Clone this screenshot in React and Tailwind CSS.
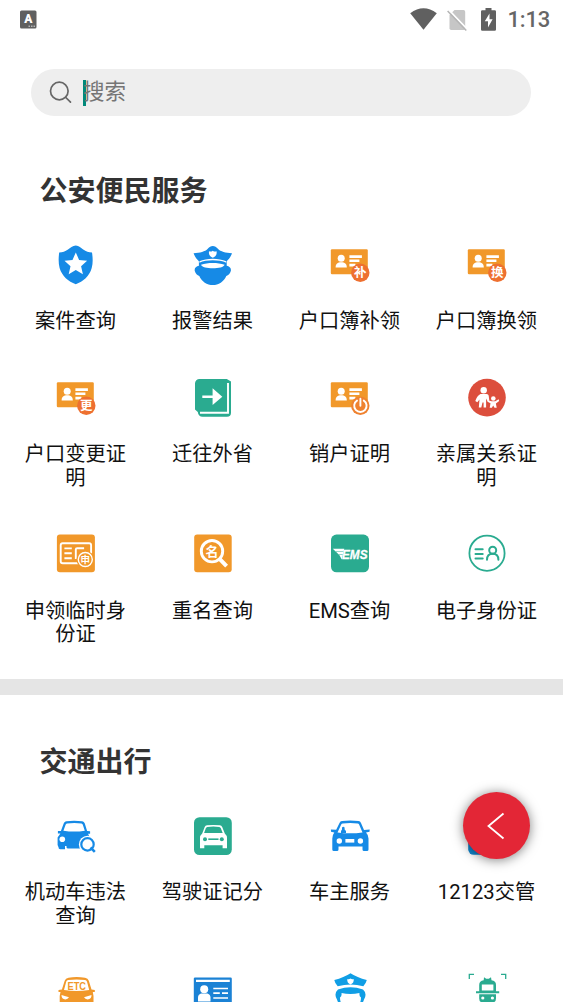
import React from 'react';

const ORANGE = '#f1982a';
const DEEP_ORANGE = '#ee7030';
const TEAL = '#2aab90';
const BLUE = '#168ae6';

function Icon({ children }) {
  return (
    <svg viewBox="0 0 40 40" className="block h-10 w-10 shrink-0 overflow-visible">
      {children}
    </svg>
  );
}

// Single character drawn inside an icon
function Glyph({ x, y, size, children }) {
  return (
    <text
      x={x}
      y={y}
      fontSize={size}
      fontWeight="700"
      fill="#fff"
      textAnchor="middle"
      fontFamily="'Noto Sans CJK SC', sans-serif"
    >
      {children}
    </text>
  );
}

function ShieldIcon() {
  return (
    <Icon>
      <path fill={BLUE} d="M19.8.4C23 .9 25 2.600 27.200 4.400c2.800 2.200 5.500 2.500 8.800 3.200C36.900 13 37 18.500 35.700 23c-2.200 8-8.500 13.700-15.900 16.200C12.300 36.700 6 31 3.600 23 2.400 18.500 2.400 13 3.200 7.600c3.300-.7 6-1 8.800-3.200C14.300 2.600 16.500.9 19.800.4z" />
      <path fill="#fff" d="m19.800 7.400 3.300 7.600 8 .8-6 5.400 1.800 8-7.100-4.200-7.100 4.200 1.800-8-6-5.400 8-.8z" />
    </Icon>
  );
}

function OfficerIcon() {
  return (
    <Icon>
      <path fill={BLUE} d="M19.800 1c2 0 3.600 1.300 5.300 3.100C27.500 6.700 32.500 7.900 39 8.300c-1.300 3.600-3.300 6-5.300 8v4.500c2.800.6 4.800 2.200 4.100 5.300-.7 2.800-2.400 4.300-4.500 4.800C31 36.500 25.500 40 19.800 40S8.600 36.500 6.300 30.900c-2.100-.5-3.800-2-4.500-4.800-.7-3.100 1.300-4.700 4.100-5.300v-4.500C3.900 14.300 1.900 11.900.6 8.300 7.100 7.900 12.100 6.700 14.500 4.100 16.200 2.300 17.800 1 19.800 1z" />
      <path fill="#fff" d="M6.400 16.200C13.500 12.800 26 12.800 33.200 16.200v1.500C26 14.500 13.500 14.500 6.400 17.700z" />
      <path fill="#fff" d="M8 19.700c7-2.400 16.600-2.400 23.600 0-1.300 4.800-22.300 4.800-23.600 0z" />
      <path fill="#fff" d="M16 6.300q2 .8 3.800-.6 1.800 1.400 3.800.6c.4 3-.8 5.300-3.800 6.400-3-1.100-4.200-3.400-3.800-6.400z" />
    </Icon>
  );
}

function CardIcon({ char, power }) {
  return (
    <Icon>
      <rect x=".8" y="4.200" width="37" height="25" rx="1.200" fill={ORANGE} />
      <circle cx="11.200" cy="13.200" r="3.500" fill="#fff" />
      <path fill="#fff" d="M5.600 22.400c0-3.500 2-5.100 5.600-5.100s5.600 1.600 5.600 5.100z" />
      <path fill="#fff" d="M19.400 10.300h12.500v2.700H19.400zM19.400 14.600h10v2.300h-10zM19.400 18.700h6v2.700h-6z" />
      <circle cx="30.300" cy="27.700" r="9.200" fill={power ? '#ef8230' : DEEP_ORANGE} />
      {char && <Glyph x="30.300" y="32.300" size="12.500">{char}</Glyph>}
      {power && (
        <path
          fill="none"
          stroke="#fff"
          strokeWidth="1.900"
          strokeLinecap="round"
          d="M27 22.600a6.200 6.200 0 1 0 6.800 0M30.400 20.700v7"
        />
      )}
    </Icon>
  );
}

function BookIcon() {
  return (
    <Icon>
      <path fill={TEAL} d="M6.500 1h27.300L38 3.500v31.200a4 4 0 0 1-4 4H9.500C7 38.700 5 37 4.800 34L2 31.500v-26A4.500 4.500 0 0 1 6.500 1z" />
      <path fill="none" stroke="#fff" strokeWidth="1.900" d="M35 5v29.800H7" />
      <path fill="#fff" d="M9.300 17.400h10.300v-7.100l9.700 8.400-9.700 8.300v-6.900H9.300z" />
    </Icon>
  );
}

function FamilyIcon() {
  return (
    <Icon>
      <circle cx="20" cy="19.600" r="18.800" fill="#dc4e3c" />
      <circle cx="16.700" cy="12.300" r="3.200" fill="#fff" />
      <path fill="#fff" d="M13.500 16h6c1.500 0 2.300 1.200 2.300 2.600l.5 4-1.700.8-1.500-3v9h-2.500v-5h-1.100l-1.200 5h-2.500l.7-8-2.200 2.800-2-1.200c1.200-2.900 2.500-5.800 5.200-7z" />
      <circle cx="26.300" cy="20.500" r="2.300" fill="#fff" />
      <path fill="#fff" d="m21 22.200 3.500 1h3.700l3.400-2 .6 1.800-3.300 2.500.8 4.300h-2.200l-1.300-2.400-1.300 2.400h-2.200l.8-4.600-3-1.400z" />
    </Icon>
  );
}

function TempCardIcon() {
  return (
    <Icon>
      <rect x=".9" y=".6" width="38" height="37.700" rx="3" fill={ORANGE} />
      <rect x="4.700" y="9.200" width="30.400" height="20" rx="2" fill="none" stroke="#fff" strokeWidth="1.900" />
      <path fill="none" stroke="#fff" strokeWidth="1.900" d="M8.400 14.400h7.400M8.400 19.300h7.400M8.400 24.200h7.400M19.800 25v-9.500q0-1.300 1.300-1.300h7" />
      <circle cx="29.300" cy="25.500" r="8.800" fill={ORANGE} />
      <circle cx="29.300" cy="25.500" r="7" fill="none" stroke="#fff" strokeWidth="1.400" />
      <Glyph x="29.300" y="29" size="9.500">申</Glyph>
    </Icon>
  );
}

function NameSearchIcon() {
  return (
    <Icon>
      <rect x="1.200" y=".6" width="37.500" height="37.700" rx="3" fill={ORANGE} />
      <circle cx="19" cy="17.200" r="10.700" fill="none" stroke="#fff" strokeWidth="2.900" />
      <path stroke="#fff" strokeWidth="4" d="m26.800 25.200 6.800 7" />
      <Glyph x="19" y="22" size="13">名</Glyph>
    </Icon>
  );
}

function EmsIcon() {
  return (
    <Icon>
      <rect x="1" y=".6" width="38" height="37.700" rx="5.500" fill={TEAL} />
      <path fill="#fff" d="M2.800 14.800h11.500l-.7 2.700H5.600zM6.200 18h7.300l-.6 2.500H8.700zM9.300 21h3.500l-1 4.400z" />
      <text
        x="12"
        y="25"
        fontSize="13.500"
        fontWeight="700"
        fontStyle="italic"
        fill="#fff"
        stroke="#fff"
        strokeWidth=".3"
        textLength="25.500"
        lengthAdjust="spacingAndGlyphs"
        fontFamily="'Liberation Sans', sans-serif"
      >
        EMS
      </text>
    </Icon>
  );
}

function ElectronicIdIcon() {
  return (
    <Icon>
      <g fill="none" stroke={TEAL}>
        <circle cx="20" cy="19.200" r="17.600" strokeWidth="1.800" />
        <path strokeWidth="2" strokeLinecap="round" d="M8.500 15.200h7.200M8.500 19.900h7.200M8.500 24.500h7.200" />
        <circle cx="25.700" cy="16.200" r="3.500" strokeWidth="2" />
        <path strokeWidth="2" strokeLinecap="round" d="M20 25.700c0-3.900 2.200-6 5.700-6s5.700 2.100 5.700 6" />
      </g>
    </Icon>
  );
}

function CarSearchIcon() {
  return (
    <Icon>
      <path fill={BLUE} fillRule="evenodd" d="M10.500 5.300q7.500-1 15.500 0c1.500.2 2.300 1 2.800 2.300l2.300 7.400 3 .2v2.600h-2l1.600 4v10.700H13.500c-3 0-3-.2-3-2.500H9v3.200H4.300c-1.200 0-1.700-.5-1.700-1.700l-1-2.500v-7.600L4.400 17.600H1.900V15l3-.1 2.800-7.300c.5-1.300 1.300-2.100 2.800-2.300zm.4 2.200q-1 .2-1.300 1.200l-2.200 6q11 1.800 21.400 0l-2-6q-.3-1-1.300-1.200-7-.8-14.600 0z" />
      <circle cx="6.300" cy="23.300" r="2.800" fill="#fff" />
      <circle cx="31.500" cy="28.400" r="8.600" fill="#fff" />
      <circle cx="31.500" cy="28.400" r="6.200" fill="none" stroke={BLUE} strokeWidth="2.200" />
      <path stroke={BLUE} strokeWidth="2.600" d="m34.500 31.500 4.300 4.300" />
    </Icon>
  );
}

function LicenseIcon() {
  return (
    <Icon>
      <rect x="1" y="1.200" width="37.800" height="37.800" rx="5.500" fill={TEAL} />
      <path fill="#fff" fillRule="evenodd" d="M14 9.300q6.300-.8 12.800 0 1.700.2 2.400 1.800l2.600 6.500q2.200 2 2.200 4.200v10.400h-4.400v-3H11.300v3H7V21.800q0-2.200 2.200-4.200l2.500-6.500q.6-1.600 2.300-1.800zm.3 1.600q-1 .2-1.400 1.100l-1.800 5h18.600l-2-5q-.4-.9-1.400-1.100-6-.8-12 0z" />
      <circle cx="12" cy="23.200" r="2" fill={TEAL} />
      <circle cx="28.800" cy="23.200" r="2" fill={TEAL} />
      <path stroke={TEAL} strokeWidth="1.600" d="M15.300 23.200h10.200" />
    </Icon>
  );
}

function CarIcon() {
  return (
    <Icon>
      <path fill={BLUE} fillRule="evenodd" d="M12 5q8-.9 16.500 0 1.800.2 2.500 1.900l3 7 5.700-.4-.2 2.200-3.500.8q2.500 2.500 2.500 6v11q0 1.500-1.500 1.500h-3q-1.500 0-1.500-1.500v-3H8.500v3Q8.500 35 7 35H3.800q-1.500 0-1.500-1.500v-11q0-3.500 2-6L1 15.700l-.1-2.200 5.300.3 3.300-6.900Q10.200 5.200 12 5zm.7 2.400q-1 .1-1.500 1.200l-3.700 7.800q12.500 1.800 25 0l-3.400-7.800q-.4-1.100-1.500-1.200-7.200-.8-14.900 0z" />
      <path fill={BLUE} d="M11 17v-2l1-1.500v-2q1.300-1.500 2.600 0v2l1.400 1.500v2z" />
      <circle cx="9.300" cy="25" r="2.700" fill="#fff" />
      <circle cx="30.400" cy="25" r="2.700" fill="#fff" />
      <rect x="15.400" y="23" width="8.900" height="3.600" fill="#fff" />
    </Icon>
  );
}

function TrafficAppIcon() {
  return (
    <Icon>
      <rect x="1.200" y="1" width="37.800" height="37.800" rx="5.500" fill="#1187cf" />
    </Icon>
  );
}

function EtcIcon() {
  return (
    <Icon>
      <path fill={ORANGE} d="M12.500 5.700q8-1.200 16.500 0 3 .4 3.800 3l2.700 8.800 3.300.5v2h-2l.7 4v15H3.700V24l.8-4h-2v-2l3.400-.5 2.800-8.800q.8-2.600 3.800-3z" />
      <path fill="#fff" d="M12.200 8q8.500-1 16.800 0 1.500.3 2 1.800l2.200 8.200q-12.700 2.200-25.200 0l2.200-8.200q.5-1.500 2-1.800z" />
      <text x="11.500" y="17.500" fontSize="11" fontWeight="700" fill={ORANGE} textLength="18.500" lengthAdjust="spacingAndGlyphs" fontFamily="'Liberation Sans', sans-serif">
        ETC
      </text>
      <path fill="#fff" d="m5.500 23 7.500 2.300q-1.500 2.500-4.500 2-3-.6-3-4.300zM35.500 23 28 25.300q1.500 2.500 4.500 2 3-.6 3-4.300z" />
    </Icon>
  );
}

function IdPanelIcon() {
  return (
    <Icon>
      <rect x=".8" y="5.500" width="38" height="30" rx="1.200" fill="#1b82d5" />
      <path fill="#fff" d="M3 7.700h33.800v2.200H3z" />
      <circle cx="11.200" cy="17.300" r="4" fill="#fff" />
      <path fill="#fff" d="M5 29.500v-4q0-3 3-4h6.500q3 1 3 4v4z" />
      <path fill="none" stroke="#fff" strokeWidth="1.700" d="M20.300 16.500H35M20.300 21.200h6.500M29 21.200h6M20.300 26H35" />
    </Icon>
  );
}

function PoliceIcon() {
  return (
    <Icon>
      <path fill="#109ee5" d="M20.500 1.300q6.500 4.200 16.300 6.800-.7 3.200-3.500 6.200-12.600-3.800-25.600 0-2.800-2.800-3.400-6.200Q14 5.500 20.500 1.300z" />
      <path fill="#fff" d="M17.300 7q1.800.5 3.200-.4 1.400.9 3.200.4.500 4-3.200 5.500-3.700-1.500-3.200-5.500z" />
      <path fill="#109ee5" d="M8 17.500q12.500-4.400 25 0 4.500 4 1 10-3 10-13.500 10T7 27.500q-3.500-6 1-10z" />
      <path fill="#fff" d="M11.500 21q9 2 18 0-.5 3 1.500 4.500 0 5-2.500 7.500h-16Q10 30.500 10 25.500q2-1.500 1.500-4.500z" />
    </Icon>
  );
}

function TrainScanIcon() {
  return (
    <Icon>
      <path fill="none" stroke={TEAL} strokeWidth="1.300" d="M2.300 7V2.300H7M34 2.300h4.700V7" />
      <path fill={TEAL} fillRule="evenodd" d="m17 5.300 2.200 1.500h2.600L24 5.300l.5 3q4.500.5 4.500 4.700v6.300h3.200v1.900H9v-1.900h3.200V13q0-4.200 4.500-4.700zM14.800 12.500v6h11.600v-6z" />
      <path fill={TEAL} d="M12.200 22.200H29v4.300q0 4-4 4h-8.800q-4 0-4-4z" />
      <circle cx="15.800" cy="26" r="1.600" fill="#fff" />
      <circle cx="25.400" cy="26" r="1.600" fill="#fff" />
    </Icon>
  );
}

const policeServices = [
  { icon: <ShieldIcon />, label: '案件查询' },
  { icon: <OfficerIcon />, label: '报警结果' },
  { icon: <CardIcon char="补" />, label: '户口簿补领' },
  { icon: <CardIcon char="换" />, label: '户口簿换领' },
  { icon: <CardIcon char="更" />, label: '户口变更证明' },
  { icon: <BookIcon />, label: '迁往外省' },
  { icon: <CardIcon power />, label: '销户证明' },
  { icon: <FamilyIcon />, label: '亲属关系证明' },
  { icon: <TempCardIcon />, label: '申领临时身份证' },
  { icon: <NameSearchIcon />, label: '重名查询' },
  { icon: <EmsIcon />, label: 'EMS查询' },
  { icon: <ElectronicIdIcon />, label: '电子身份证' },
];

const trafficServices = [
  { icon: <CarSearchIcon />, label: '机动车违法查询' },
  { icon: <LicenseIcon />, label: '驾驶证记分' },
  { icon: <CarIcon />, label: '车主服务' },
  { icon: <TrafficAppIcon />, label: '12123交管' },
  { icon: <EtcIcon /> },
  { icon: <IdPanelIcon /> },
  { icon: <PoliceIcon /> },
  { icon: <TrainScanIcon /> },
];

function StatusBar() {
  return (
    <header className="flex h-10 items-center justify-between pl-5 pr-[13px] text-[#666]">
      <svg viewBox="0 0 17 19" className="mb-[2px] h-[19px] w-[17px]">
        <rect width="16.500" height="18" y=".5" rx="1.500" fill="#606060" />
        <text x="8.300" y="13.200" fontSize="12" fontWeight="900" fill="#fff" textAnchor="middle" fontFamily="Roboto, sans-serif">A</text>
        <path stroke="#ddd" strokeWidth="1" strokeDasharray="1.500 1" d="M8.500 16.200h7" />
      </svg>
      <div className="flex items-center">
        <svg viewBox="0 0 27 22" className="mr-[10px] mb-[2px] h-[22px] w-[27px]">
          <path fill="#606060" d="M.2 5.200Q13.500-4.500 26.800 5.200L13.500 21.800z" />
        </svg>
        <svg viewBox="0 0 20 22" className="mr-[14px] mb-px h-[22px] w-5">
          <path fill="#c6c6c6" d="M7.500 1h9q1.700 0 1.700 1.700v16.500q0 1.700-1.700 1.700H4.200q-1.700 0-1.700-1.700V6z" />
          <path stroke="#fff" strokeWidth="1.700" d="m1.800.8 18 19" />
          <path stroke="#b5b5b5" strokeWidth="1.500" d="m.6 2 18.700 19.500" />
        </svg>
        <svg viewBox="0 0 15 23" className="mr-[11px] mb-[2px] h-[23px] w-[15px]">
          <path fill="#606060" d="M4.500 0h6v2.200h3.200q1.300 0 1.300 1.300v18q0 1.300-1.300 1.300H1.300Q0 22.800 0 21.500v-18q0-1.300 1.300-1.300h3.200z" />
          <path fill="#fff" d="M8.500 5.500 3.800 13.200H7v6.300l4.600-8.300H8.500z" />
        </svg>
        <span className="text-[22px] leading-6 font-medium tracking-[-0.2px]">1:13</span>
      </div>
    </header>
  );
}

function SearchBar() {
  return (
    <div className="mr-8 ml-[31px] mt-[29px] flex h-[47px] items-center rounded-full bg-[#eeeeee] pl-[18px]">
      <svg viewBox="0 0 23 23" className="h-[23px] w-[23px]" fill="none" stroke="#666" strokeWidth="1.700" strokeLinecap="round">
        <circle cx="10.300" cy="10" r="8.800" />
        <path d="m16.800 16.500 4.700 4.700" />
      </svg>
      <div className="ml-[11px] h-[26px] w-[3px] bg-[#00897b]" />
      <span className="-ml-[3px] pb-px text-[21.500px] leading-7 text-[#757575]">搜索</span>
    </div>
  );
}

function Section({ title, items }) {
  return (
    <section>
      <h2 className="pl-[39.500px] text-[28px] leading-10 font-bold text-[#333]">{title}</h2>
      <div className="mt-[32.5px] grid grid-cols-[repeat(4,137px)] gap-y-11 pl-[7px]">
        {items.map((item, i) => (
          <div key={i} className="flex flex-col items-center gap-[25.5px]">
            {item.icon}
            {item.label && (
              <p className="w-[104px] text-center text-[20.250px] leading-[23.500px] break-all text-[#111]">
                {item.label}
              </p>
            )}
          </div>
        ))}
      </div>
    </section>
  );
}

export default function App() {
  return (
    <main className="relative h-screen overflow-hidden bg-white font-[Roboto,'Noto_Sans_CJK_SC',sans-serif]">
      <StatusBar />
      <SearchBar />
      <div className="mt-14">
        <Section title="公安便民服务" items={policeServices} />
      </div>
      <div className="mt-[32.5px] mb-[48.5px] h-[15.5px] bg-[#e5e5e5]" />
      <Section title="交通出行" items={trafficServices} />

      {/* Floating back button */}
      <button
        aria-label="返回"
        className="absolute top-[792px] left-[463px] flex h-[67px] w-[67px] items-center justify-center rounded-full bg-[#e32636] shadow-[0_1px_12px_rgba(0,0,0,0.5)]"
      >
        <svg viewBox="0 0 18 28" className="mr-[2px] h-7 w-[18px]" fill="none" stroke="#fff" strokeWidth="1.800">
          <path d="M16.500 1.500 1.500 14l15 12.500" />
        </svg>
      </button>
    </main>
  );
}
